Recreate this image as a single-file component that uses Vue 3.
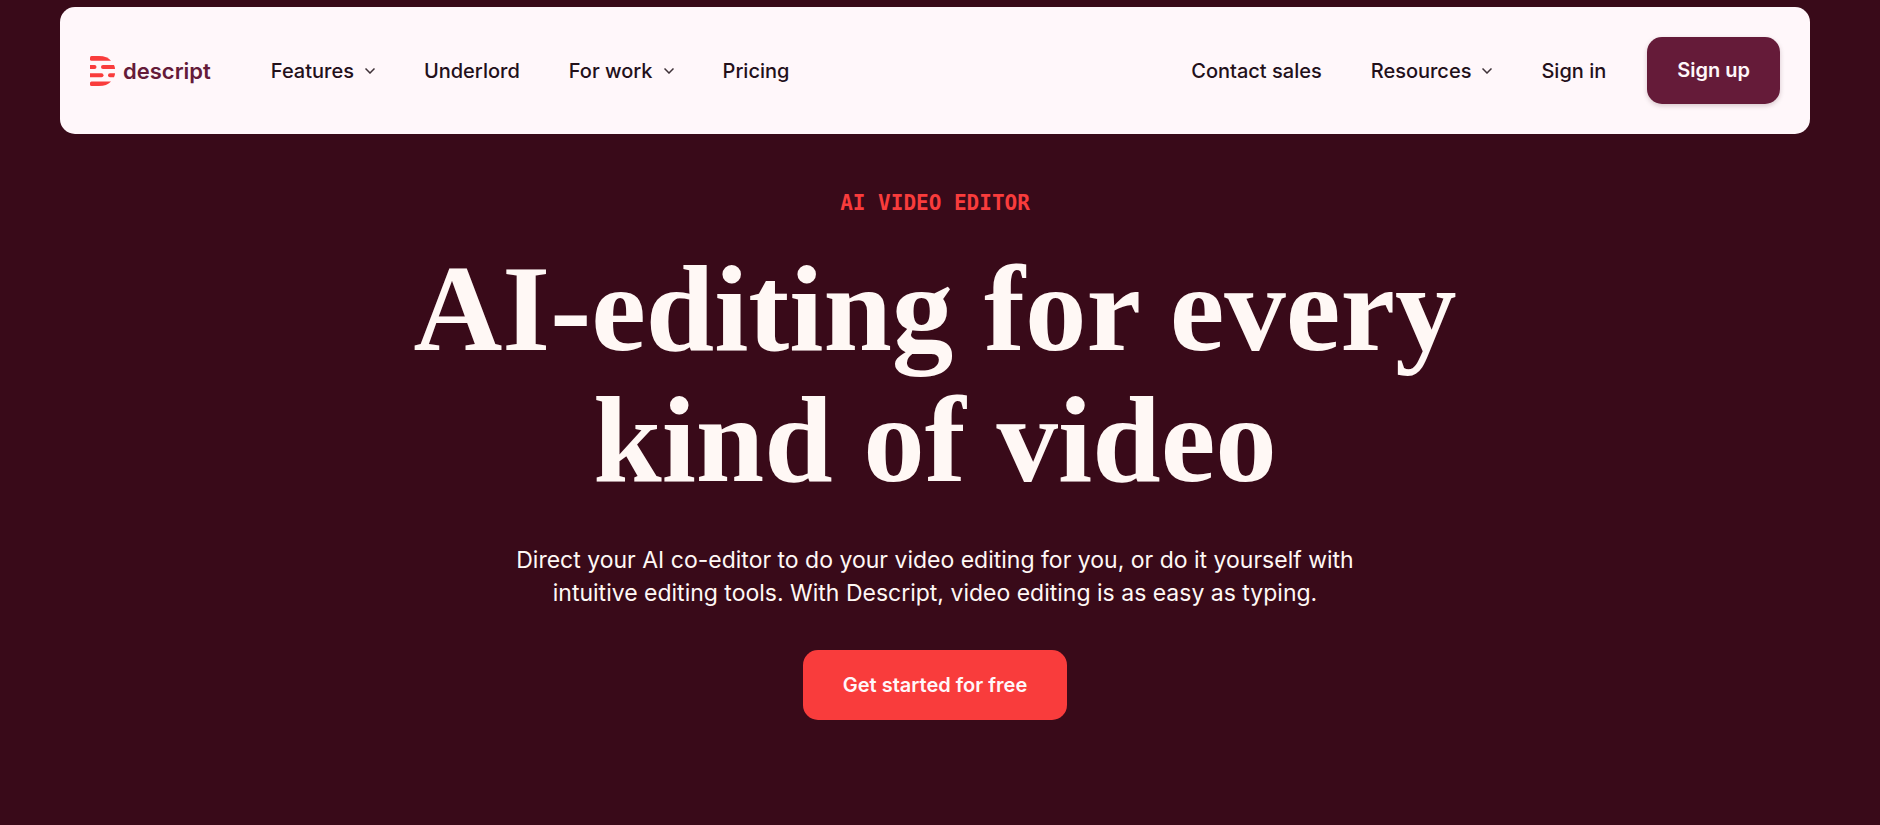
<script setup>
const primaryLinks = [
  { label: 'Features', menu: true },
  { label: 'Underlord' },
  { label: 'For work', menu: true },
  { label: 'Pricing' },
]
const secondaryLinks = [
  { label: 'Contact sales' },
  { label: 'Resources', menu: true },
  { label: 'Sign in' },
]
</script>

<template>
  <div class="page">
    <header class="bar">
      <a class="brand" href="#">
        <svg class="mark" viewBox="0 0 25 30" aria-hidden="true">
          <path d="M1.500 0H9C14.500 0 18.500 1.800 21 4.800H1.500Q0 4.800 0 3.300V1.500Q0 0 1.500 0Z" />
          <path d="M0 9H4.500A2 2 0 0 1 4.500 13H0Z" />
          <path d="M13 9H24Q25 11 25 13H13A2 2 0 0 1 13 9Z" />
          <path d="M0 17.200H11.500A2 2 0 0 1 11.500 21.200H0Z" />
          <path d="M20 17.200H25Q25 19.200 24 21.200H20A2 2 0 0 1 20 17.200Z" />
          <path d="M1.500 25.400H21C18 28.500 14.500 30 9 30H1.500Q0 30 0 28.500V27Q0 25.400 1.500 25.400Z" />
        </svg>
        <span class="wordmark">descript</span>
      </a>
      <nav class="links" aria-label="Main">
        <template v-for="link in primaryLinks" :key="link.label">
          <button v-if="link.menu" class="link" type="button">
            {{ link.label }}
            <svg class="chevron" viewBox="0 0 10 6" aria-hidden="true"><path d="M0.500 0.500L5 5L9.500 0.500" /></svg>
          </button>
          <a v-else class="link" href="#">{{ link.label }}</a>
        </template>
      </nav>
      <nav class="links account" aria-label="Account">
        <template v-for="link in secondaryLinks" :key="link.label">
          <button v-if="link.menu" class="link" type="button">
            {{ link.label }}
            <svg class="chevron" viewBox="0 0 10 6" aria-hidden="true"><path d="M0.500 0.500L5 5L9.500 0.500" /></svg>
          </button>
          <a v-else class="link" href="#">{{ link.label }}</a>
        </template>
      </nav>
      <a class="signup" href="#">Sign up</a>
    </header>
    <main class="hero">
      <p class="eyebrow">AI VIDEO EDITOR</p>
      <h1>AI-editing for every<br />kind of video</h1>
      <p class="lead">
        Direct your AI co-editor to do your video editing for you, or do it yourself with<br />
        intuitive editing tools. With Descript, video editing is as easy as typing.
      </p>
      <a class="cta" href="#">Get started for free</a>
    </main>
  </div>
</template>

<style>
body {
  margin: 0;
  background: #390a19;
}
</style>

<style scoped>
.page {
  box-sizing: border-box;
  min-height: 100vh;
  padding: 7px 70px 40px 60px;
  background: #390a19;
  font-family: Inter, "Liberation Sans", sans-serif;
  font-size: 20px;
}
.bar {
  display: flex;
  align-items: center;
  padding: 30px;
  border-radius: 15px;
  background: #fff7fa;
}
a {
  text-decoration: none;
}
.brand {
  display: flex;
  align-items: center;
  gap: 8px;
  margin-right: 60px;
  color: #651b39;
}
.mark {
  width: 25px;
  height: 30px;
  fill: #f93c3c;
}
.wordmark {
  font-size: 22px;
  font-weight: 600;
  line-height: 30px;
}
.links {
  display: flex;
  align-items: center;
  gap: 49px;
}
.account {
  margin-left: auto;
}
.link {
  display: flex;
  align-items: center;
  gap: 11px;
  padding: 0;
  border: 0;
  background: none;
  color: #23101a;
  font: inherit;
  font-weight: 500;
  line-height: 30px;
  white-space: nowrap;
}
.chevron {
  width: 10px;
  height: 6px;
  fill: none;
  stroke: #3f3238;
  stroke-width: 1.500;
}
.signup {
  margin-left: 41px;
  padding: 0 30px;
  border-radius: 15px;
  background: #651b39;
  box-shadow: 0 2px 5px rgba(57, 11, 25, 0.2);
  color: #fff7fa;
  font-weight: 600;
  line-height: 67px;
}
.hero {
  display: flex;
  flex-direction: column;
  align-items: center;
  padding-top: 54px;
  text-align: center;
}
.eyebrow {
  margin: 0;
  color: #f93c3c;
  font-family: "DejaVu Sans Mono", monospace;
  font-size: 21px;
  font-weight: 700;
  line-height: 30px;
}
h1 {
  margin: 25px 0 0;
  color: #fff8f5;
  font-family: "Liberation Serif", serif;
  font-size: 123px;
  font-weight: 700;
  line-height: 131px;
}
.lead {
  margin: 39px 0 0;
  color: #fff8f5;
  font-size: 23px;
  line-height: 33px;
}
.cta {
  margin-top: 40px;
  padding: 0 40px;
  border-radius: 15px;
  background: #f93c3c;
  color: #fff7fa;
  font-weight: 600;
  line-height: 70px;
}
</style>
